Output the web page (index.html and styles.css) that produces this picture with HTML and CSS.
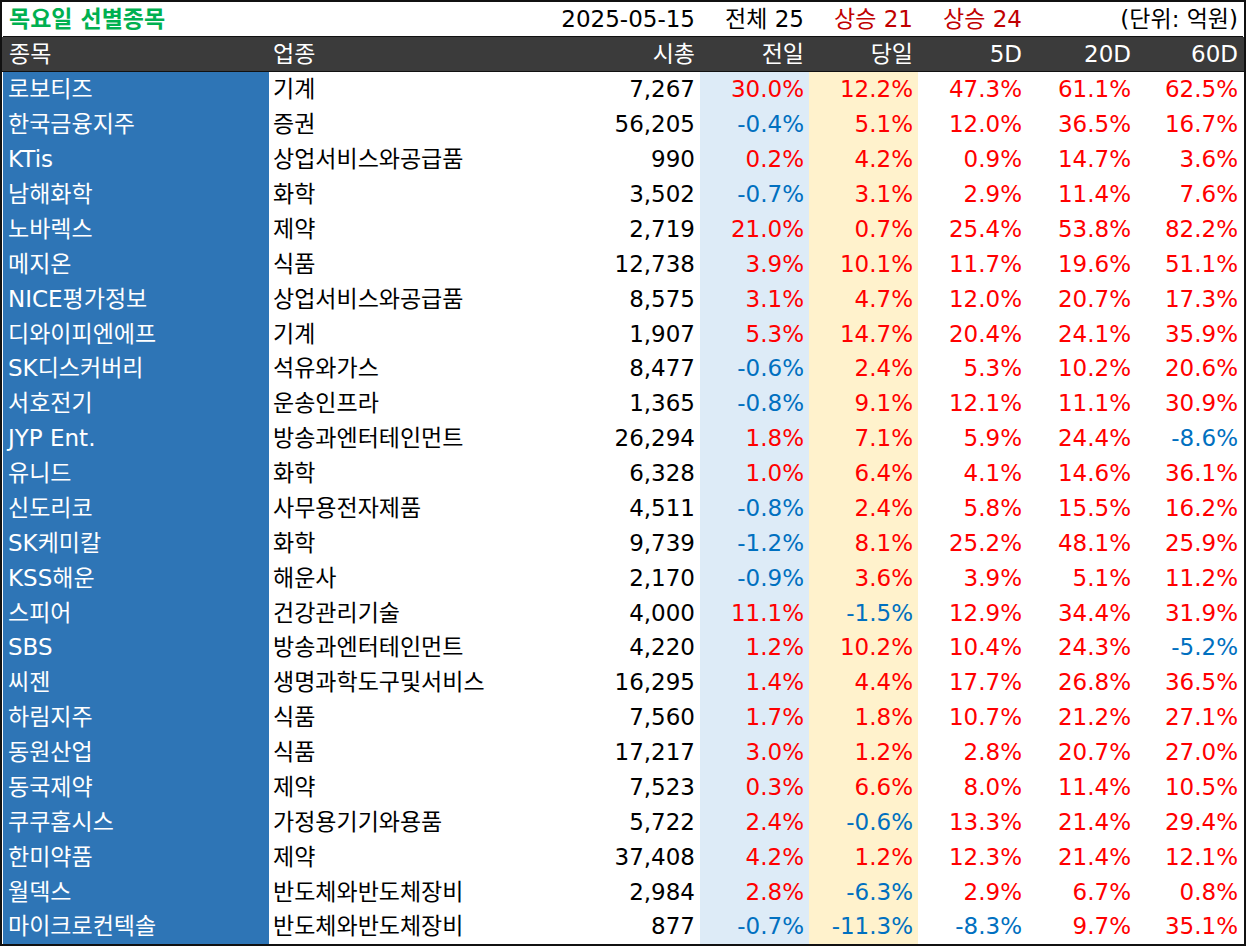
FILE: index.html
```html
<!DOCTYPE html>
<html lang="ko">
<head>
<meta charset="utf-8">
<title>목요일 선별종목</title>
<link rel="stylesheet" href="styles.css">
</head>
<body>
<div class="sheet">
  <div class="row title">
    <div class="cell ttl">목요일 선별종목</div>
    <div class="cell r span2">2025-05-15</div>
    <div class="cell r">전체 25</div>
    <div class="cell r up">상승 21</div>
    <div class="cell r up">상승 24</div>
    <div class="cell r span2">(단위: 억원)</div>
  </div>
  <div class="row head">
    <div class="cell">종목</div>
    <div class="cell">업종</div>
    <div class="cell r">시총</div>
    <div class="cell r">전일</div>
    <div class="cell r">당일</div>
    <div class="cell r">5D</div>
    <div class="cell r">20D</div>
    <div class="cell r">60D</div>
  </div>
  <div class="body">
    <div class="row"><div class="cell name">로보티즈</div><div class="cell">기계</div><div class="cell r">7,267</div><div class="cell r prev pos">30.0%</div><div class="cell r today pos">12.2%</div><div class="cell r pos">47.3%</div><div class="cell r pos">61.1%</div><div class="cell r pos">62.5%</div></div>
    <div class="row"><div class="cell name">한국금융지주</div><div class="cell">증권</div><div class="cell r">56,205</div><div class="cell r prev neg">-0.4%</div><div class="cell r today pos">5.1%</div><div class="cell r pos">12.0%</div><div class="cell r pos">36.5%</div><div class="cell r pos">16.7%</div></div>
    <div class="row"><div class="cell name">KTis</div><div class="cell">상업서비스와공급품</div><div class="cell r">990</div><div class="cell r prev pos">0.2%</div><div class="cell r today pos">4.2%</div><div class="cell r pos">0.9%</div><div class="cell r pos">14.7%</div><div class="cell r pos">3.6%</div></div>
    <div class="row"><div class="cell name">남해화학</div><div class="cell">화학</div><div class="cell r">3,502</div><div class="cell r prev neg">-0.7%</div><div class="cell r today pos">3.1%</div><div class="cell r pos">2.9%</div><div class="cell r pos">11.4%</div><div class="cell r pos">7.6%</div></div>
    <div class="row"><div class="cell name">노바렉스</div><div class="cell">제약</div><div class="cell r">2,719</div><div class="cell r prev pos">21.0%</div><div class="cell r today pos">0.7%</div><div class="cell r pos">25.4%</div><div class="cell r pos">53.8%</div><div class="cell r pos">82.2%</div></div>
    <div class="row"><div class="cell name">메지온</div><div class="cell">식품</div><div class="cell r">12,738</div><div class="cell r prev pos">3.9%</div><div class="cell r today pos">10.1%</div><div class="cell r pos">11.7%</div><div class="cell r pos">19.6%</div><div class="cell r pos">51.1%</div></div>
    <div class="row"><div class="cell name">NICE평가정보</div><div class="cell">상업서비스와공급품</div><div class="cell r">8,575</div><div class="cell r prev pos">3.1%</div><div class="cell r today pos">4.7%</div><div class="cell r pos">12.0%</div><div class="cell r pos">20.7%</div><div class="cell r pos">17.3%</div></div>
    <div class="row"><div class="cell name">디와이피엔에프</div><div class="cell">기계</div><div class="cell r">1,907</div><div class="cell r prev pos">5.3%</div><div class="cell r today pos">14.7%</div><div class="cell r pos">20.4%</div><div class="cell r pos">24.1%</div><div class="cell r pos">35.9%</div></div>
    <div class="row"><div class="cell name">SK디스커버리</div><div class="cell">석유와가스</div><div class="cell r">8,477</div><div class="cell r prev neg">-0.6%</div><div class="cell r today pos">2.4%</div><div class="cell r pos">5.3%</div><div class="cell r pos">10.2%</div><div class="cell r pos">20.6%</div></div>
    <div class="row"><div class="cell name">서호전기</div><div class="cell">운송인프라</div><div class="cell r">1,365</div><div class="cell r prev neg">-0.8%</div><div class="cell r today pos">9.1%</div><div class="cell r pos">12.1%</div><div class="cell r pos">11.1%</div><div class="cell r pos">30.9%</div></div>
    <div class="row"><div class="cell name">JYP Ent.</div><div class="cell">방송과엔터테인먼트</div><div class="cell r">26,294</div><div class="cell r prev pos">1.8%</div><div class="cell r today pos">7.1%</div><div class="cell r pos">5.9%</div><div class="cell r pos">24.4%</div><div class="cell r neg">-8.6%</div></div>
    <div class="row"><div class="cell name">유니드</div><div class="cell">화학</div><div class="cell r">6,328</div><div class="cell r prev pos">1.0%</div><div class="cell r today pos">6.4%</div><div class="cell r pos">4.1%</div><div class="cell r pos">14.6%</div><div class="cell r pos">36.1%</div></div>
    <div class="row"><div class="cell name">신도리코</div><div class="cell">사무용전자제품</div><div class="cell r">4,511</div><div class="cell r prev neg">-0.8%</div><div class="cell r today pos">2.4%</div><div class="cell r pos">5.8%</div><div class="cell r pos">15.5%</div><div class="cell r pos">16.2%</div></div>
    <div class="row"><div class="cell name">SK케미칼</div><div class="cell">화학</div><div class="cell r">9,739</div><div class="cell r prev neg">-1.2%</div><div class="cell r today pos">8.1%</div><div class="cell r pos">25.2%</div><div class="cell r pos">48.1%</div><div class="cell r pos">25.9%</div></div>
    <div class="row"><div class="cell name">KSS해운</div><div class="cell">해운사</div><div class="cell r">2,170</div><div class="cell r prev neg">-0.9%</div><div class="cell r today pos">3.6%</div><div class="cell r pos">3.9%</div><div class="cell r pos">5.1%</div><div class="cell r pos">11.2%</div></div>
    <div class="row"><div class="cell name">스피어</div><div class="cell">건강관리기술</div><div class="cell r">4,000</div><div class="cell r prev pos">11.1%</div><div class="cell r today neg">-1.5%</div><div class="cell r pos">12.9%</div><div class="cell r pos">34.4%</div><div class="cell r pos">31.9%</div></div>
    <div class="row"><div class="cell name">SBS</div><div class="cell">방송과엔터테인먼트</div><div class="cell r">4,220</div><div class="cell r prev pos">1.2%</div><div class="cell r today pos">10.2%</div><div class="cell r pos">10.4%</div><div class="cell r pos">24.3%</div><div class="cell r neg">-5.2%</div></div>
    <div class="row"><div class="cell name">씨젠</div><div class="cell">생명과학도구및서비스</div><div class="cell r">16,295</div><div class="cell r prev pos">1.4%</div><div class="cell r today pos">4.4%</div><div class="cell r pos">17.7%</div><div class="cell r pos">26.8%</div><div class="cell r pos">36.5%</div></div>
    <div class="row"><div class="cell name">하림지주</div><div class="cell">식품</div><div class="cell r">7,560</div><div class="cell r prev pos">1.7%</div><div class="cell r today pos">1.8%</div><div class="cell r pos">10.7%</div><div class="cell r pos">21.2%</div><div class="cell r pos">27.1%</div></div>
    <div class="row"><div class="cell name">동원산업</div><div class="cell">식품</div><div class="cell r">17,217</div><div class="cell r prev pos">3.0%</div><div class="cell r today pos">1.2%</div><div class="cell r pos">2.8%</div><div class="cell r pos">20.7%</div><div class="cell r pos">27.0%</div></div>
    <div class="row"><div class="cell name">동국제약</div><div class="cell">제약</div><div class="cell r">7,523</div><div class="cell r prev pos">0.3%</div><div class="cell r today pos">6.6%</div><div class="cell r pos">8.0%</div><div class="cell r pos">11.4%</div><div class="cell r pos">10.5%</div></div>
    <div class="row"><div class="cell name">쿠쿠홈시스</div><div class="cell">가정용기기와용품</div><div class="cell r">5,722</div><div class="cell r prev pos">2.4%</div><div class="cell r today neg">-0.6%</div><div class="cell r pos">13.3%</div><div class="cell r pos">21.4%</div><div class="cell r pos">29.4%</div></div>
    <div class="row"><div class="cell name">한미약품</div><div class="cell">제약</div><div class="cell r">37,408</div><div class="cell r prev pos">4.2%</div><div class="cell r today pos">1.2%</div><div class="cell r pos">12.3%</div><div class="cell r pos">21.4%</div><div class="cell r pos">12.1%</div></div>
    <div class="row"><div class="cell name">월덱스</div><div class="cell">반도체와반도체장비</div><div class="cell r">2,984</div><div class="cell r prev pos">2.8%</div><div class="cell r today neg">-6.3%</div><div class="cell r pos">2.9%</div><div class="cell r pos">6.7%</div><div class="cell r pos">0.8%</div></div>
    <div class="row"><div class="cell name">마이크로컨텍솔</div><div class="cell">반도체와반도체장비</div><div class="cell r">877</div><div class="cell r prev neg">-0.7%</div><div class="cell r today neg">-11.3%</div><div class="cell r neg">-8.3%</div><div class="cell r pos">9.7%</div><div class="cell r pos">35.1%</div></div>
  </div>
</div>
</body>
</html>
```

FILE: styles.css
```css
html, body {
  margin: 0;
  padding: 0;
  background: #ffffff;
}

.sheet {
  width: 1246px;
  height: 946px;
  box-sizing: border-box;
  border: 2px solid #111111;
  padding: 0 1px;
  font-family: "DejaVu Sans", "Noto Sans CJK KR", sans-serif;
  font-size: 23px;
  color: #000000;
  overflow: hidden;
}

.row {
  display: grid;
  grid-template-columns: 266px 321px 110px 109px 109px 109px 109px 107px;
  height: 34.88px;
}

.cell {
  display: flex;
  align-items: center;
  padding: 1px 5px 0 4px;
  white-space: nowrap;
  line-height: 1;
  min-width: 0;
}

.cell.r {
  justify-content: flex-end;
}

.span2 {
  grid-column: span 2;
}

.title {
  height: 34px;
  border-bottom: 1px solid #111111;
}

.title .ttl {
  color: #00b050;
  font-weight: bold;
  padding-left: 6px;
}

.title .up {
  color: #c00000;
}

.head {
  height: 34px;
  margin: 0 -1px;
  padding: 0 1px;
  background: #3b3b3b;
  color: #ffffff;
  border-bottom: 1px solid #111111;
}

.head .cell:first-child {
  padding-left: 6px;
}

.name {
  background: #2e75b6;
  color: #ffffff;
  padding-left: 5px;
}

.prev {
  background: #ddebf7;
}

.today {
  background: #fff2cc;
}

.pos {
  color: #ff0000;
}

.neg {
  color: #0070c0;
}
```
